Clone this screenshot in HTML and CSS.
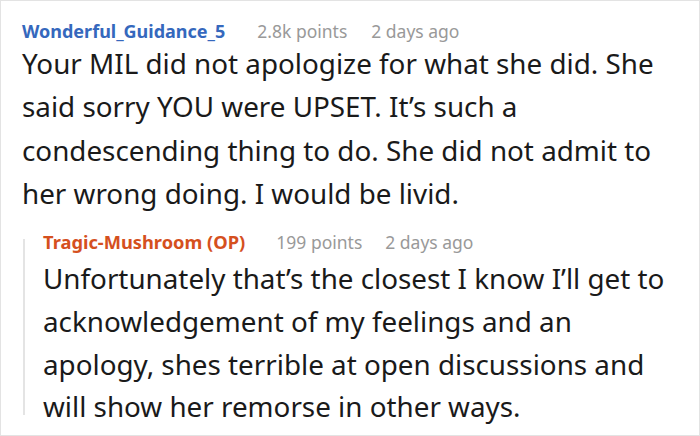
FILE: index.html
```html
<!DOCTYPE html>
<html>
<head>
<meta charset="utf-8">
<link rel="stylesheet" href="styles.css">
</head>
<body>
<div class="frame">
  <div class="comment">
    <div class="meta">
      <span class="user">Wonderful_Guidance_5</span>
      <span class="points">2.8k points</span>
      <span class="time">2 days ago</span>
    </div>
    <p class="text">Your MIL did not apologize for what she did. She<br>said sorry YOU were UPSET. It’s such a<br>condescending thing to do. She did not admit to<br>her wrong doing. I would be livid.</p>
    <div class="reply">
      <div class="meta">
        <span class="user op">Tragic-Mushroom (OP)</span>
        <span class="points">199 points</span>
        <span class="time">2 days ago</span>
      </div>
      <p class="text">Unfortunately that’s the closest I know I’ll get to<br>acknowledgement of my feelings and an<br>apology, shes terrible at open discussions and<br>will show her remorse in other ways.</p>
    </div>
  </div>
</div>
</body>
</html>
```

FILE: styles.css
```css
html, body {
  margin: 0;
  padding: 0;
  background: #ffffff;
}
.frame {
  box-sizing: border-box;
  width: 700px;
  height: 436px;
  border: 1px solid #e3e3e3;
  padding: 18px 0 0 21px;
  font-family: "Noto Sans", "Open Sans", sans-serif;
  overflow: hidden;
}
.meta {
  display: flex;
  align-items: baseline;
  font-size: 17.5px;
  line-height: 24px;
  white-space: nowrap;
}
.user {
  font-weight: 700;
  font-size: 18px;
  color: #3568bd;
}
.user.op {
  font-size: 18.3px;
  color: #d5501e;
}
.points {
  color: #999999;
  margin-left: 32px;
}
.time {
  color: #999999;
  margin-left: 24px;
}
.reply .points {
  margin-left: 31px;
}
.reply .time {
  margin-left: 23px;
}
.text {
  margin: -1px 0 0 0;
  font-size: 27.8px;
  line-height: 43.3px;
  color: #1a1a1a;
  white-space: nowrap;
}
.reply {
  margin-top: 15px;
  margin-left: 1px;
  padding-left: 20px;
  background: linear-gradient(#e4e4e4, #e4e4e4) no-repeat 0 9px / 2px calc(100% - 22px);
}
.reply .text {
  margin-top: 3px;
  line-height: 42.7px;
}
```
